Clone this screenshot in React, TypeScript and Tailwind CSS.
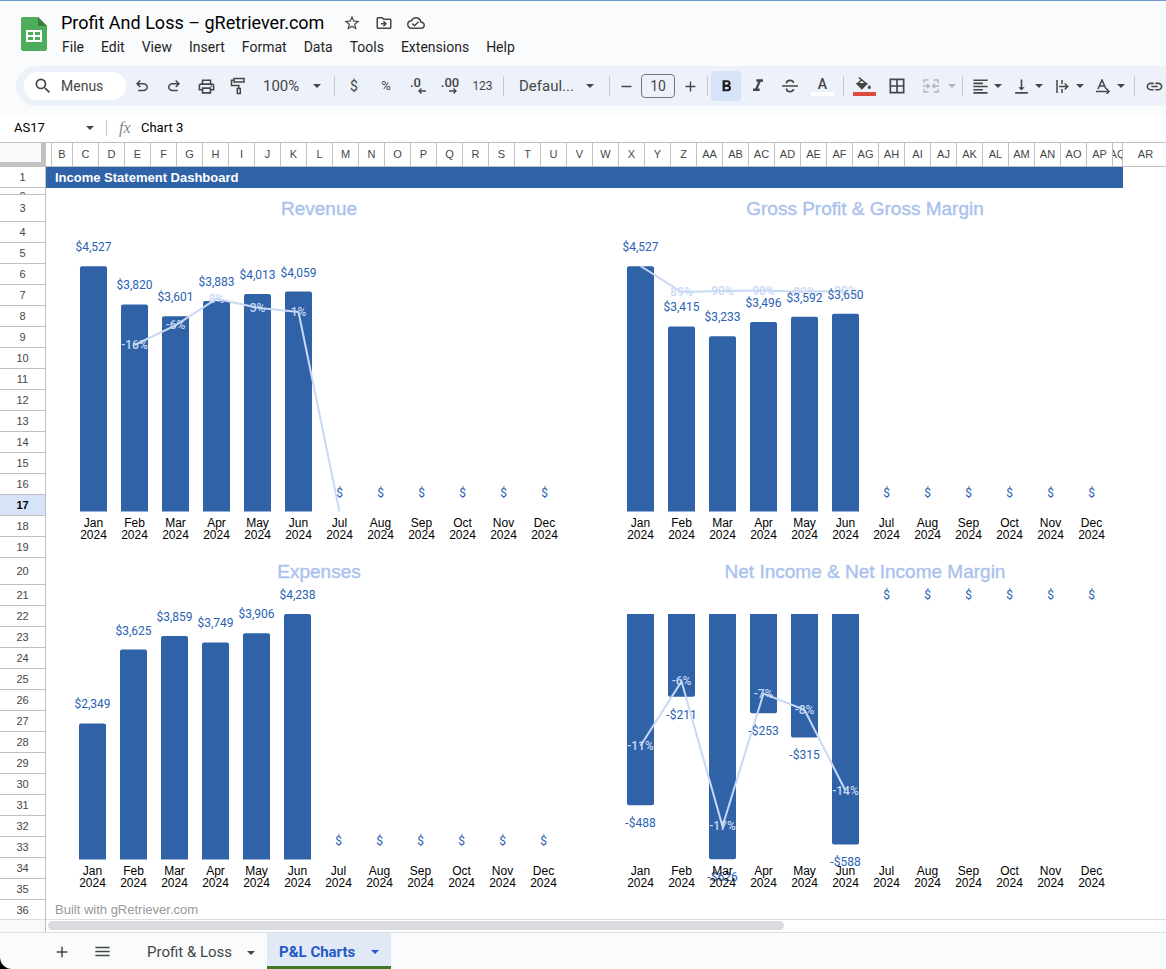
import clsx from "clsx";
import {ReactNode} from "react";
import {
    MdAdd,
    MdBorderAll,
    MdFormatAlignLeft,
    MdFormatBold,
    MdFormatItalic,
    MdMenu,
    MdOutlineCloudDone,
    MdOutlineDriveFileMove,
    MdOutlinePrint,
    MdRemove,
    MdSearch,
    MdStarBorder,
    MdVerticalAlignBottom,
} from "react-icons/md";

interface ChartConfig {
    title: string;
    values: number[];
    // first bar centre, zero line and pixels per dollar
    left: number;
    zero: number;
    scale: number;
    height: number;
    axisY: number;
    rates?: (number | null)[];
    rateZero?: number;
    rateScale?: number;
}

const MONTHS = ["Jan", "Feb", "Mar", "Apr", "May", "Jun", "Jul", "Aug", "Sep", "Oct", "Nov", "Dec"];
const STEP = 41;
const BAR = 27;

const CHARTS: ChartConfig[] = [
    {
        title: "Revenue",
        values: [4527, 3820, 3601, 3883, 4013, 4059],
        left: 47.5, zero: 283.5, scale: 0.0542, height: 323, axisY: 299,
        rates: [null, -15.6, -5.7, 7.8, 3.3, 1.1, -100],
        rateZero: 86.2, rateScale: 1.973,
    },
    {
        title: "Gross Profit & Gross Margin",
        values: [4527, 3415, 3233, 3496, 3592, 3650],
        left: 48.5, zero: 283.5, scale: 0.0542, height: 323, axisY: 299,
        rates: [100, 89.4, 89.8, 90, 89.49, 89.9],
        rateZero: 283.5, rateScale: 2.455,
    },
    {
        title: "Expenses",
        values: [2349, 3625, 3859, 3749, 3906, 4238],
        left: 46.5, zero: 268.5, scale: 0.0579, height: 308, axisY: 284,
    },
    {
        title: "Net Income & Net Income Margin",
        values: [-488, -211, -626, -253, -315, -588],
        left: 48.5, zero: 23, scale: 0.3919, height: 308, axisY: 284,
        rates: [-10.8, -5.52, -17.4, -6.52, -7.85, -14.49],
        rateZero: 23, rateScale: 12.2,
    },
];

const COLUMNS = [
    ..."CDEFGHIJKLMNOPQRSTUVWXYZ".split(""),
    ..."ABCDEFGHIJKLMNOP".split("").map((c) => "A" + c),
];

const ROWS = Array.from({length: 36}, (_, i) => i + 1);

const money = (v: number) => (v < 0 ? "-$" : "$") + (v === 0 ? "" : Math.abs(v).toLocaleString("en-US"));

function barPath(x: number, zero: number, h: number) {
    const r = 2;
    const s = h < 0 ? 1 : -1;
    const end = zero - h;
    return `M${x} ${zero}V${end - s * r}Q${x} ${end} ${x + r} ${end}H${x + BAR - r}Q${x + BAR} ${end} ${x + BAR} ${end - s * r}V${zero}Z`;
}

function Chart({config}: { config: ChartConfig }) {
    const {title, values, left, zero, scale, height, axisY, rates = [], rateZero = 0, rateScale = 1} = config;
    const cx = (i: number) => left + i * STEP;
    const rateY = (v: number) => rateZero - v * rateScale;
    const points = rates.map((v, i) => (v === null ? null : `${cx(i)},${rateY(v)}`)).filter(Boolean).join(" ");

    return (
        <section>
            <h2 className="h-10 text-center text-[19px] leading-[42px] text-[#abc2ee] [-webkit-text-stroke:0.4px_#abc2ee]">{title}</h2>
            <svg width={546} height={height} className="block overflow-visible" textAnchor="middle">
                {values.map((v, i) => (
                    <path key={i} d={barPath(cx(i) - BAR / 2, zero, v * scale)} fill="#2f62a7"/>
                ))}
                {points && <polyline points={points} fill="none" stroke="#c9d8f4" strokeWidth={2}/>}
                <g className="font-[Roboto,sans-serif] text-xs">
                    {rates.map((v, i) => v !== null && Math.abs(v) !== 100 && (
                        <text key={i} x={cx(i)} y={rateY(v) + 4} fill="#c9d8f4" className="font-medium">{Math.round(v)}%</text>
                    ))}
                    {MONTHS.map((m, i) => {
                        const v = values[i] ?? 0;
                        const y = v < 0 ? zero - v * scale + 22 : zero - v * scale - 15;
                        return (
                            <text key={m} x={cx(i)} y={y} fill="#2a62b3" stroke="#fff" strokeWidth={1}
                                  paintOrder="stroke">{money(v)}</text>
                        );
                    })}
                </g>
                <g className="text-xs" fill="#000">
                    {MONTHS.map((m, i) => (
                        <text key={m} y={axisY}>
                            <tspan x={cx(i)}>{m}</tspan>
                            <tspan x={cx(i)} dy={12}>2024</tspan>
                        </text>
                    ))}
                </g>
            </svg>
        </section>
    );
}

function Caret({className}: { className?: string }) {
    return (
        <svg width="8" height="4" viewBox="0 0 8 4" className={clsx("shrink-0", className)}>
            <path d="M0 0h8L4 4z" fill="currentColor"/>
        </svg>
    );
}

function Divider() {
    return <div className="ml-1 mr-[3px] h-5 w-px shrink-0 bg-[#c7c7c7]"/>;
}

function Tool({label, className = "w-8", children}: { label: string, className?: string, children: ReactNode }) {
    return (
        <button type="button" aria-label={label}
                className={clsx("flex h-[30px] shrink-0 items-center justify-center rounded", className)}>
            {children}
        </button>
    );
}

function MenuTool({label, children}: { label: string, children: ReactNode }) {
    return (
        <Tool label={label} className="w-[41px]">
            <span className="flex w-7 justify-center">{children}</span>
            <Caret className="mr-[5px]"/>
        </Tool>
    );
}

function Symbol({d, size = 18}: { d: string, size?: number }) {
    return (
        <svg width={size} height={size} viewBox="0 -960 960 960" fill="currentColor">
            <path d={d}/>
        </svg>
    );
}

function Logo() {
    return (
        <svg width="26" height="34" viewBox="0 0 26 34" aria-label="Sheets">
            <path d="M2 0h15l9 9v23a2 2 0 0 1-2 2H2a2 2 0 0 1-2-2V2a2 2 0 0 1 2-2z" fill="#4ead5b"/>
            <path d="M17 0l9 9h-9z" fill="#3b7d3a"/>
            <path d="M5 13h16v12H5z" fill="#fff"/>
            <path d="M7 15h5v3H7zM14 15h5v3h-5zM7 20h5v3H7zM14 20h5v3h-5z" fill="#4ead5b"/>
        </svg>
    );
}

function DocumentHeader() {
    return (
        <header className="flex h-[66px] border-t border-[#6f97d2] pl-[21px] pt-2 text-[#1f1f1f]">
            <div className="pt-2">
                <Logo/>
            </div>
            <div className="ml-[14px]">
                <div className="flex h-7 items-center">
                    <h1 className="text-lg leading-7 text-black">Profit And Loss – gRetriever.com</h1>
                    <div className="ml-[19px] flex items-center gap-[14px] text-[#444746]">
                        <button type="button" aria-label="Star"><MdStarBorder size={18}/></button>
                        <button type="button" aria-label="Move"><MdOutlineDriveFileMove size={18}/></button>
                        <button type="button" aria-label="Saved to Drive"><MdOutlineCloudDone size={18}/></button>
                    </div>
                </div>
                <nav className="flex gap-[17px] pl-px text-sm leading-5">
                    {["File", "Edit", "View", "Insert", "Format", "Data", "Tools", "Extensions", "Help"].map((m) => (
                        <button type="button" key={m}>{m}</button>
                    ))}
                </nav>
            </div>
        </header>
    );
}

function Toolbar() {
    return (
        <div className="ml-4 flex h-10 items-center overflow-hidden rounded-l-full bg-[#edf2fa] pl-2 text-sm text-[#444746]">
            <button type="button" className="flex h-7 w-[102px] shrink-0 items-center gap-2 rounded-full bg-white pl-[9px]">
                <MdSearch size={20}/>Menus
            </button>
            <Tool label="Undo">
                <Symbol d="M280-200v-80h284q63 0 109.5-40T720-420q0-60-46.5-100T564-560H312l104 104-56 56-200-200 200-200 56 56-104 104h252q97 0 166.5 63T800-420q0 94-69.5 157T564-200H280Z"/>
            </Tool>
            <Tool label="Redo">
                <Symbol d="M396-200q-97 0-166.5-63T160-420q0-94 69.5-157T396-640h252L544-744l56-56 200 200-200 200-56-56 104-104H396q-63 0-109.5 40T240-420q0 60 46.5 100T396-280h284v80H396Z"/>
            </Tool>
            <Tool label="Print"><MdOutlinePrint size={19}/></Tool>
            <Tool label="Paint format">
                <svg width="16" height="18" viewBox="0 0 16 18" fill="none" stroke="currentColor" strokeWidth="1.5">
                    <path d="M4 1.5h10v3.5H4zM4 3.2H1.5v5.3h7.300v3"/>
                    <path d="M7.300 11.500h3v5h-3z"/>
                </svg>
            </Tool>
            <label className="relative flex w-[76px] shrink-0 items-center">
                <select aria-label="Zoom" className="w-full appearance-none bg-transparent pl-[9px] pt-[2px] text-[15px]">
                    <option>100%</option>
                </select>
                <Caret className="pointer-events-none absolute right-[9px]"/>
            </label>
            <Divider/>
            <Tool label="Format as currency">$</Tool>
            <Tool label="Format as percent"><span className="text-[13px]">%</span></Tool>
            <Tool label="Decrease decimal places">
                <span className="flex flex-col items-start text-[13px] font-medium leading-[10px]">
                    .0
                    <svg width="8" height="6" viewBox="0 0 8 6" className="ml-2" fill="none" stroke="currentColor" strokeWidth="1.4"><path d="M8 3H1M3.500 .5L1 3l2.500 2.500"/></svg>
                </span>
            </Tool>
            <Tool label="Increase decimal places">
                <span className="flex flex-col items-start text-[13px] font-medium leading-[10px]">
                    .00
                    <svg width="8" height="6" viewBox="0 0 8 6" className="ml-2" fill="none" stroke="currentColor" strokeWidth="1.4"><path d="M0 3h7M4.500 .5L7 3 4.500 5.500"/></svg>
                </span>
            </Tool>
            <Tool label="More formats" className="w-[33px]"><span className="text-xs">123</span></Tool>
            <Divider/>
            <label className="relative flex w-[98px] shrink-0 items-center">
                <select aria-label="Font" className="w-full appearance-none bg-transparent pl-3 pt-[2px] text-[15px]">
                    <option>Defaul...</option>
                </select>
                <Caret className="pointer-events-none absolute right-[11px]"/>
            </label>
            <Divider/>
            <Tool label="Decrease font size" className="w-[26px]"><MdRemove size={17}/></Tool>
            <input aria-label="Font size" defaultValue="10"
                   className="mx-[2px] h-6 w-[34px] shrink-0 rounded border border-[#747775] bg-transparent text-center"/>
            <Tool label="Increase font size" className="w-[26px]"><MdAdd size={17}/></Tool>
            <Divider/>
            <Tool label="Bold" className="mr-px w-[30px] bg-[#d6e3f8] text-[#1f1f1f]"><MdFormatBold size={19}/></Tool>
            <Tool label="Italic"><MdFormatItalic size={20}/></Tool>
            <Tool label="Strikethrough">
                <svg width="16" height="14" viewBox="0 0 16 14" fill="none" stroke="currentColor" strokeWidth="1.7">
                    <path d="M0 7h16M4.500 4.500C4.500 .3 11.500 .3 11.500 4M4.500 9.500c0 4.200 7 4.200 7 .5"/>
                </svg>
            </Tool>
            <Tool label="Text color" className="w-[33px]">
                <span className="flex flex-col items-center text-sm font-medium leading-[14px]">
                    A
                    <span className="mt-px h-1 w-[23px] bg-white"/>
                </span>
            </Tool>
            <Divider/>
            <Tool label="Fill color" className="w-[34px]">
                <span className="flex flex-col items-center">
                    <svg width="16" height="14" viewBox="0 0 16 14" fill="none" stroke="currentColor" strokeWidth="1.500">
                        <path d="M2.800 .5l7.700 6.300-4.600 4.600L1.300 6.800 6 2.500"/>
                        <path d="M1.300 6.800h9.200l-4.600 4.600z" fill="currentColor"/>
                        <path d="M13.300 8.300c.9 1.100 1.200 1.700 1.200 2.200a1.200 1.200 0 0 1-2.400 0c0-.5.300-1.100 1.200-2.200z" fill="currentColor" strokeWidth="0.700"/>
                    </svg>
                    <span className="mt-px h-1 w-[23px] bg-[#dc4b3e]"/>
                </span>
            </Tool>
            <Tool label="Borders"><MdBorderAll size={20}/></Tool>
            <Tool label="Merge cells" className="w-[45px] gap-[9px] pl-2 text-[#b4b8b9]">
                <svg width="16" height="14" viewBox="0 0 16 14" fill="none" stroke="currentColor" strokeWidth="1.600" className="shrink-0">
                    <path d="M5.500 1H1v3M10.500 1H15v3M5.500 13H1v-3M10.500 13H15v-3M0 7h6M10 7h6M4 4.800L6.200 7 4 9.200M12 4.800L9.800 7 12 9.200"/>
                </svg>
                <Caret/>
            </Tool>
            <Divider/>
            <MenuTool label="Horizontal align"><MdFormatAlignLeft size={19}/></MenuTool>
            <MenuTool label="Vertical align"><MdVerticalAlignBottom size={19}/></MenuTool>
            <MenuTool label="Text wrapping">
                <svg width="13" height="13" viewBox="0 0 13 13" fill="none" stroke="currentColor" strokeWidth="1.500">
                    <path d="M1 0v13M6 0v4M6 9v4M3 6.500h8.500M8.700 3.500l3 3-3 3"/>
                </svg>
            </MenuTool>
            <MenuTool label="Text rotation">
                <svg width="14" height="15" viewBox="0 0 14 15" fill="none" stroke="currentColor" strokeWidth="1.500">
                    <path d="M2 10L6 1l4 9M3.400 7h5.200M0 12.500h12.500M10.500 9.800l2.500 2.700-2.500 2.500"/>
                </svg>
            </MenuTool>
            <Divider/>
            <Tool label="Insert link">
                <Symbol d="M440-280H280q-83 0-141.500-58.500T80-480q0-83 58.500-141.500T280-680h160v80H280q-50 0-85 35t-35 85q0 50 35 85t85 35h160v80ZM320-440v-80h320v80H320Zm200 160v-80h160q50 0 85-35t35-85q0-50-35-85t-85-35H520v-80h160q83 0 141.500 58.500T880-480q0 83-58.500 141.500T680-280H520Z" size={19}/>
            </Tool>
        </div>
    );
}

function FormulaBar() {
    return (
        <div className="mt-2 flex h-7 items-center bg-white text-[13px] text-black">
            <label className="relative flex w-[106px] items-center">
                <input aria-label="Name box" defaultValue="AS17" className="w-full bg-transparent pl-[14px]"/>
                <Caret className="absolute right-3 text-[#444746]"/>
            </label>
            <div className="h-4 w-px bg-[#c7c7c7]"/>
            <label htmlFor="formula" className="ml-3 w-[22px] font-['Liberation_Serif',serif] text-base italic text-[#80868b]">fx</label>
            <input id="formula" defaultValue="Chart 3" className="min-w-0 flex-1 bg-transparent"/>
        </div>
    );
}

function ColumnHead({name, className}: { name: string, className: string }) {
    return (
        <div className={clsx("flex shrink-0 items-center justify-center overflow-hidden border-r border-[#c0c0c0]", className)}>
            <span>{name}</span>
        </div>
    );
}

function rowHeight(row: number) {
    if (row === 2) return "h-[7px]";
    if (row === 3 || row === 20) return "h-[27px]";
    return "h-[21px]";
}

function Sheet() {
    return (
        <main className="overflow-hidden bg-white font-['Liberation_Sans',Arial,sans-serif]">
            <div className="flex h-[25px] border-y border-[#c0c0c0] text-[11px] text-[#444746]">
                <div className="w-[46px] shrink-0 border-b-4 border-r-[5px] border-[#c0c2c1] bg-[#f8f9fa]"/>
                <ColumnHead name="" className="w-[6px]"/>
                <ColumnHead name="B" className="w-[21px]"/>
                {COLUMNS.map((c) => <ColumnHead key={c} name={c} className="w-[26px]"/>)}
                <ColumnHead name="AQ" className="w-[10px]"/>
                <ColumnHead name="AR" className="w-[46px]"/>
            </div>
            <div className="flex">
                <div className="w-[46px] shrink-0 border-r border-[#c0c0c0] text-[11px] leading-4 text-[#444746]">
                    {ROWS.map((row) => (
                        <div key={row}
                             className={clsx(
                                 "flex justify-center overflow-hidden border-b border-[#c0c0c0]",
                                 rowHeight(row),
                                 row === 2 ? "items-start" : "items-center",
                                 row === 17 && "bg-[#d6e3f8] font-bold text-black",
                             )}>
                            <span>{row}</span>
                        </div>
                    ))}
                </div>
                <div className="shrink-0">
                    <h2 className="h-[21px] w-[1077px] bg-[#2f62a7] pl-[9px] text-[13px] font-bold leading-[21px] text-white">
                        Income Statement Dashboard
                    </h2>
                    <div className="grid grid-cols-[546px_546px]">
                        {CHARTS.map((c) => <Chart key={c.title} config={c}/>)}
                    </div>
                    <p className="pl-[9px] text-[13px] leading-[22px] text-[#999]">Built with gRetriever.com</p>
                </div>
            </div>
            <div className="-mt-[2px] flex h-[13px] border-t border-[#dcdddf] bg-white">
                <div className="w-[46px] border-r border-[#c0c0c0] bg-[#f8f9fa]"/>
                <div className="ml-[2px] mt-px h-[9px] w-[736px] rounded-full bg-[#dadce0]"/>
            </div>
        </main>
    );
}

function SheetTabs() {
    return (
        <footer className="flex flex-1 items-stretch overflow-hidden rounded-bl-xl border-t border-[#dcdddf] bg-[#f9fbfd] text-[15px] text-[#444746]">
            <div className="ml-[46px] flex items-center pt-px">
                <Tool label="Add sheet"><MdAdd size={18}/></Tool>
                <Tool label="All sheets" className="ml-2 w-8"><MdMenu size={19}/></Tool>
            </div>
            <button type="button" className="ml-[17px] flex w-[132px] items-center justify-between px-3 pt-[3px]">
                Profit &amp; Loss
                <Caret/>
            </button>
            <button type="button"
                    className="flex w-[124px] items-center justify-between border-b-[3px] border-[#41792b] bg-[#e1e9f7] px-3 pt-[5px] font-bold text-[#2559c7]">
                P&amp;L Charts
                <Caret/>
            </button>
        </footer>
    );
}

export default function App() {
    return (
        <div className="flex min-h-screen flex-col overflow-hidden bg-black font-[Roboto,'Open_Sans',sans-serif]">
            <div className="bg-[#f9fbfd]">
                <DocumentHeader/>
                <Toolbar/>
                <FormulaBar/>
            </div>
            <Sheet/>
            <SheetTabs/>
        </div>
    );
}
